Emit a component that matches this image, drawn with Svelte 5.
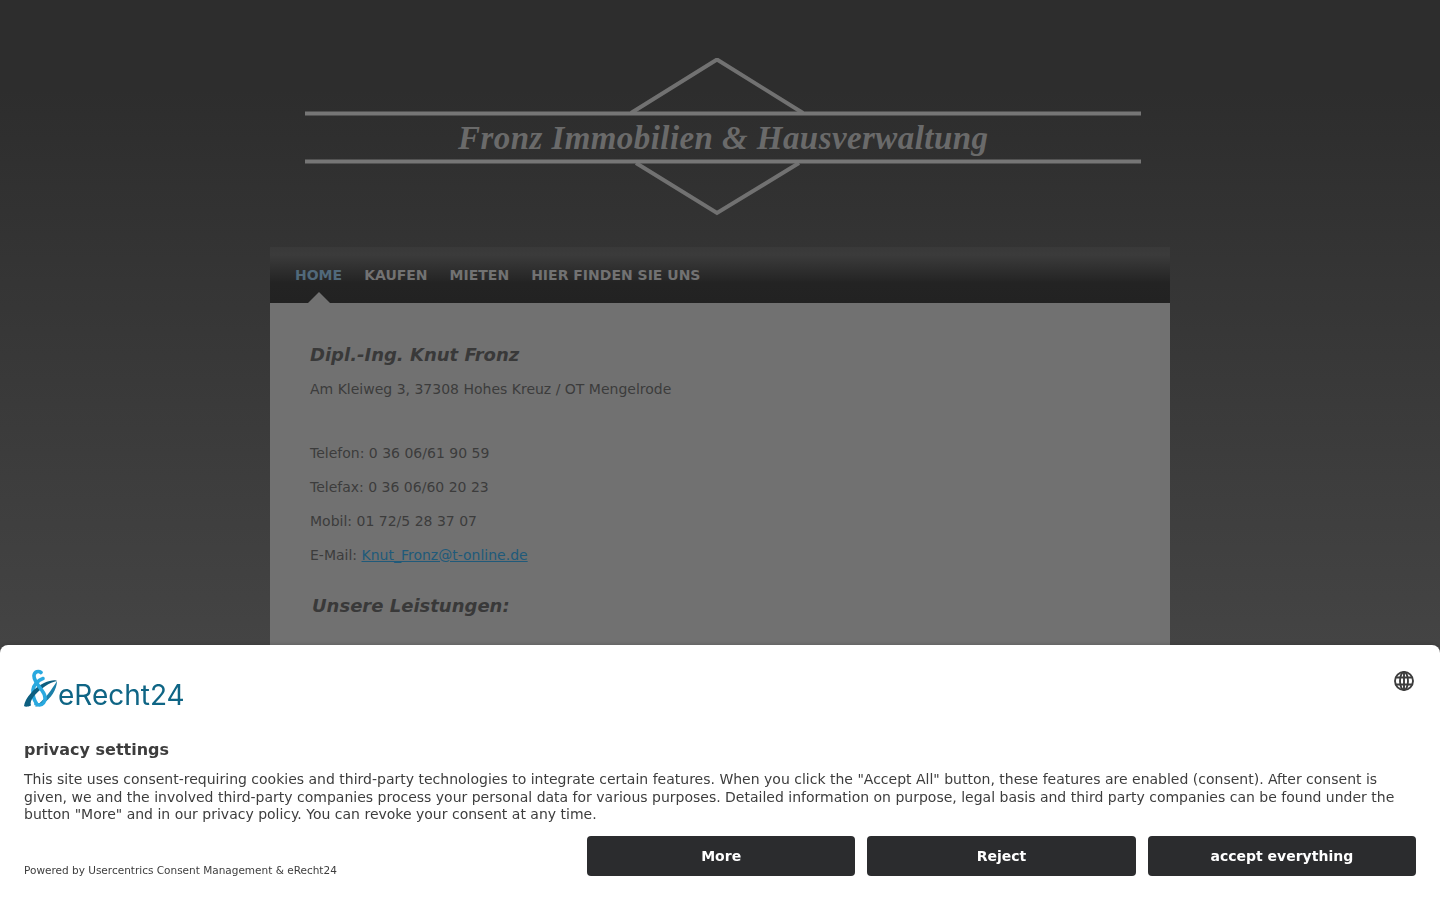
<script>
  let navItems = [
    { text: "HOME", active: true },
    { text: "KAUFEN" },
    { text: "MIETEN" },
    { text: "HIER FINDEN SIE UNS" },
  ];

  let contact = [
    "Telefon: 0 36 06/61 90 59",
    "Telefax: 0 36 06/60 20 23",
    "Mobil: 01 72/5 28 37 07",
  ];
</script>

<div class="page">
  <header class="head">
    <svg class="brand" width="840" height="160" viewBox="0 0 840 160" role="img" aria-label="Fronz Immobilien & Hausverwaltung">
      <path class="line" d="M326 55 L412 1.5 L498 55" />
      <path class="line" d="M331 105 L412 155 L494 105" />
      <rect x="0" y="53.5" width="836" height="4" />
      <rect x="0" y="101.5" width="836" height="4" />
      <text x="153" y="91" textLength="530">Fronz Immobilien &amp; Hausverwaltung</text>
    </svg>
  </header>

  <div class="wrap">
    <nav class="nav">
      {#each navItems as item}
        <a href="#top" class:active={item.active}>{item.text}</a>
      {/each}
    </nav>

    <main class="content">
      <h2>Dipl.-Ing. Knut Fronz</h2>
      <p>Am Kleiweg 3, 37308 Hohes Kreuz / OT Mengelrode</p>
      <p class="gap"></p>
      {#each contact as line}
        <p>{line}</p>
      {/each}
      <p>E-Mail: <a href="#top">Knut_Fronz@t-online.de</a></p>
      <h2 class="second">Unsere Leistungen:</h2>
    </main>
  </div>
</div>

<!-- Consent banner -->
<section class="banner">
  <div class="banner-top">
    <div class="logo">
      <svg width="36" height="40" viewBox="0 0 36 40" aria-hidden="true">
        <path class="back" d="M33 12 C33 20 27 30 18 35 C15 37 13 37.5 11 37.5 C20 32 28 20 33 12 Z" />
        <path class="curl" d="M19 9.5 C14 11 9.5 16 9 21 C8.7 26 10 31 12.5 34.5" />
        <path class="swoosh" d="M0 37 C1 29 10 19 20 14 C26 11 32 10.5 33 12 C26 13 16 20 10 27 C7 31 6 34 7 36.5 C4 38 1 38 0 37 Z" />
        <path class="curl" d="M17 3.5 C14.5 1.5 10.5 2.5 10 6.5 C9.5 11 14 16 18 21.5 C21 25.5 22 30.5 19.5 34 C17.5 36.5 15 36.5 12 35" />
      </svg>
      <span>eRecht24</span>
    </div>
    <svg class="globe" width="20" height="20" viewBox="0 0 20 20" aria-label="language">
      <circle cx="10" cy="10" r="9" />
      <ellipse cx="10" cy="10" rx="4" ry="9" />
      <path d="M10 1 V19 M1.8 6.5 H18.2 M1.8 13.5 H18.2" />
    </svg>
  </div>

  <h3>privacy settings</h3>
  <p class="message">This site uses consent-requiring cookies and third-party technologies to integrate certain features. When you click the "Accept All" button, these features are enabled (consent). After consent is given, we and the involved third-party companies process your personal data for various purposes. Detailed information on purpose, legal basis and third party companies can be found under the button "More" and in our privacy policy. You can revoke your consent at any time.</p>

  <div class="banner-bottom">
    <span class="powered">Powered by Usercentrics Consent Management &amp; eRecht24</span>
    <div class="buttons">
      <button>More</button>
      <button>Reject</button>
      <button>accept everything</button>
    </div>
  </div>
</section>

<style>
  :global(body) {
    margin: 0;
    background: #2d2d2d;
    font-family: "DejaVu Sans", sans-serif;
    overflow: hidden;
  }

  .page {
    height: 100vh;
    overflow: hidden;
    background: linear-gradient(#2d2d2d 0, #2d2d2d 90px, #444 645px);
  }

  .head {
    display: flex;
    justify-content: center;
    height: 247px;
    box-sizing: border-box;
    padding: 58px 0 0 10px;
  }

  .brand rect {
    fill: #767676;
  }

  .brand .line {
    fill: none;
    stroke: #717171;
    stroke-width: 4;
  }

  .brand text {
    font-family: "Liberation Serif", serif;
    font-style: italic;
    font-weight: bold;
    font-size: 33px;
    fill: #6a6a6a;
  }

  .wrap {
    width: 900px;
    margin: 0 auto;
  }

  .nav {
    display: flex;
    gap: 22px;
    height: 56px;
    box-sizing: border-box;
    padding: 0 25px;
    align-items: center;
    background: linear-gradient(#393939 0, #3b3b3b 8px, #232323 36px, #222 100%);
  }

  .nav a {
    position: relative;
    color: #727272;
    font-size: 14px;
    font-weight: bold;
    text-decoration: none;
  }

  .nav a.active {
    color: #51697a;
  }

  .nav a.active::after {
    content: "";
    position: absolute;
    left: 50%;
    bottom: -20px;
    margin-left: -11px;
    border: 11px solid transparent;
    border-top: 0;
    border-bottom-color: #717171;
  }

  .content {
    background: #717171;
    padding: 40px 40px 0;
    height: 600px;
    font-size: 14px;
  }

  h2 {
    margin: 0 0 12px;
    font-size: 18px;
    line-height: 24px;
    font-style: italic;
    font-weight: bold;
    color: #393939;
  }

  h2.second {
    margin: 29px 0 0 2px;
  }

  .content p {
    margin: 0 0 14px;
    line-height: 20px;
    color: #3c3c3c;
  }

  .content p.gap {
    height: 10px;
    margin-bottom: 20px;
  }

  .content a {
    color: #205a7a;
  }

  .banner {
    position: fixed;
    left: 0;
    right: 0;
    bottom: 0;
    height: 255px;
    box-sizing: border-box;
    padding: 22px 24px 24px;
    background: #fff;
    border-radius: 8px 8px 0 0;
    box-shadow: 0 -1px 4px rgba(0, 0, 0, 0.15);
  }

  .banner-top {
    display: flex;
    justify-content: space-between;
    align-items: flex-start;
    height: 73px;
  }

  .logo {
    display: flex;
    align-items: flex-end;
    height: 42px;
  }

  .logo span {
    font-family: Inter, sans-serif;
    font-weight: 400;
    font-size: 28px;
    line-height: 34px;
    margin: 0 0 -3px -2px;
    color: #0f6585;
  }

  .curl {
    fill: none;
    stroke: #2aa9df;
    stroke-width: 3.6;
    stroke-linecap: round;
  }

  .swoosh {
    fill: #0d5f80;
  }

  .back {
    fill: #1b7fa8;
  }

  .globe {
    margin: 4px 2px 0 0;
    fill: none;
    stroke: #3d3d3d;
    stroke-width: 1.9;
  }

  h3 {
    margin: 0 0 11px;
    font-size: 16px;
    line-height: 20px;
    font-weight: bold;
    color: #3d3d3d;
  }

  .message {
    margin: 0;
    font-size: 14px;
    line-height: 17.5px;
    color: #3d3d3d;
  }

  .banner-bottom {
    display: flex;
    justify-content: space-between;
    align-items: flex-end;
    margin-top: 12px;
  }

  .powered {
    font-size: 10.5px;
    line-height: 13px;
    margin-bottom: -1px;
    color: #3d3d3d;
  }

  .buttons {
    display: grid;
    grid-template-columns: repeat(3, 1fr);
    gap: 12px;
    width: 829px;
  }

  button {
    height: 40px;
    border: 0;
    border-radius: 4px;
    background: #2b2c2e;
    color: #fff;
    font-family: inherit;
    font-size: 14px;
    font-weight: bold;
  }
</style>
